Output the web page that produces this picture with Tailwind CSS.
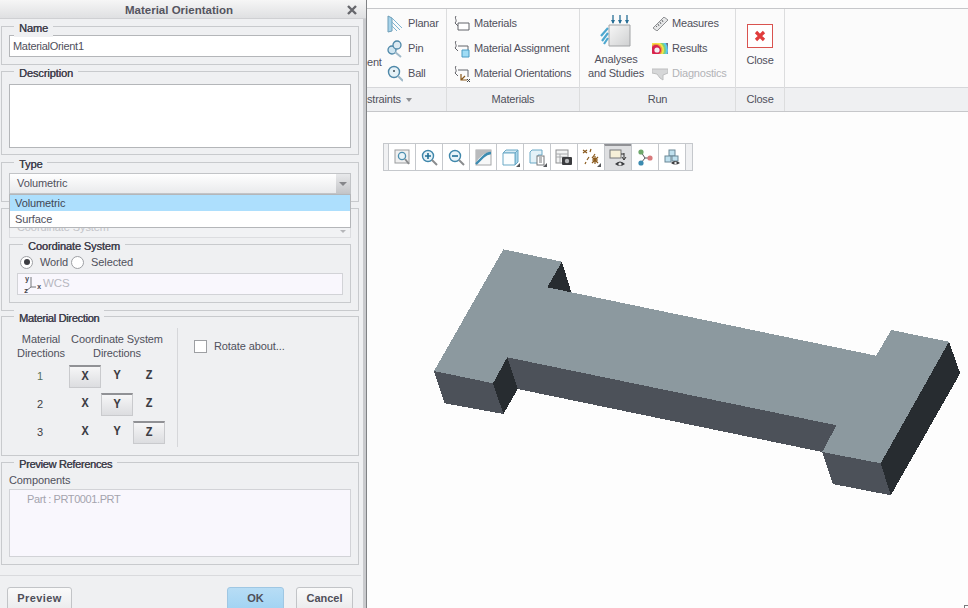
<!DOCTYPE html>
<html lang="en">
<head>
  <meta charset="UTF-8" />
  <title>Material Orientation</title>
  <script src="https://cdn.jsdelivr.net/npm/@tailwindcss/browser@4"></script>
</head>
<body class="w-[968px] h-[608px] overflow-hidden bg-[#fdfdfd] flex font-['Liberation_Sans',sans-serif] text-[11px] tracking-[-0.1px] text-[#50505c]">

  <!-- dialog -->
  <div class="relative w-[367px] h-[608px] shrink-0 bg-[#eff0f2] border-r border-[#808285] overflow-hidden">
    <div class="absolute right-0 top-0 w-[3px] h-full bg-[#c9cacd]"></div>
    <div class="h-[19px] bg-gradient-to-b from-[#f6f6f6] to-[#dfe0e2] border-b border-[#cfd0d3] flex items-center justify-center pr-[8px] pt-[3px] relative">
      <span class="font-bold text-[11.5px] tracking-normal text-[#55555f]">Material Orientation</span>
      <svg class="absolute left-[347px] top-[5px]" width="10" height="10" viewBox="0 0 10 10"><path d="M1 1L9 9M9 1L1 9" stroke="#66676c" stroke-width="2.4"/></svg>
    </div>
    <div class="w-[361px] pl-[1px] pt-[7px] flex flex-col">

      <div class="relative h-[39px] w-[358px] border border-[#c8cacd] pt-[8px] pl-[7px]">
        <span class="absolute left-[12px] top-[-7px] px-[5px] bg-[#eff0f2] text-[#3f3f4c] [text-shadow:0.35px_0_0_#3f3f4c]">Name</span>
        <div class="w-[342px] h-[22px] border border-[#b4b6b9] bg-white flex items-center pl-[3px] tracking-[-0.3px]">MaterialOrient1</div>
      </div>

      <div class="relative h-[84px] w-[358px] mt-[6px] border border-[#c8cacd] pt-[12px] pl-[7px]">
        <span class="absolute left-[12px] top-[-7px] px-[5px] bg-[#eff0f2] text-[#3f3f4c] [text-shadow:0.35px_0_0_#3f3f4c]">Description</span>
        <div class="w-[342px] h-[64px] border border-[#b4b6b9] bg-white"></div>
      </div>

      <div class="relative h-[40px] w-[358px] mt-[7px] border border-[#c8cacd] pt-[10px] pl-[7px]">
        <span class="absolute left-[12px] top-[-7px] px-[5px] bg-[#eff0f2] text-[#3f3f4c] [text-shadow:0.35px_0_0_#3f3f4c]">Type</span>
        <div class="w-[342px] h-[21px] border border-[#c2c4c7] bg-gradient-to-b from-white to-[#e9eaec] flex items-center pl-[7px] relative">Volumetric
          <div class="absolute right-0 top-0 w-[14px] h-[19px] bg-gradient-to-b from-[#e8e9eb] to-[#c5c6c9] flex items-center justify-center">
            <div class="w-0 h-0 border-l-[4px] border-r-[4px] border-t-[4px] border-l-transparent border-r-transparent border-t-[#85868a]"></div>
          </div>
        </div>
      </div>

      <div class="relative h-[103px] w-[358px] mt-[6px] border border-[#c8cacd] pl-[7px] pt-[8px]">
        <div class="w-[342px] h-[21px] border border-[#dcdde0] bg-[#f1f2f4] flex items-center pl-[7px] text-[#c3c4c8] relative">Coordinate System
          <div class="absolute right-[4px] bottom-[4px] w-0 h-0 border-l-[3px] border-r-[3px] border-t-[3px] border-l-transparent border-r-transparent border-t-[#b5b6b9]"></div>
        </div>
        <div class="relative h-[59px] w-[342px] border border-[#c8cacd] mt-[6px] px-[7px] pt-[9px]">
          <span class="absolute left-[13px] top-[-7px] px-[5px] bg-[#eff0f2] text-[#3f3f4c] [text-shadow:0.35px_0_0_#3f3f4c]">Coordinate System</span>
          <div class="flex items-center h-[16px]">
            <span class="w-[13px] h-[13px] rounded-full border border-[#9d9fa3] bg-white flex items-center justify-center ml-[3px]"><span class="w-[6px] h-[6px] rounded-full bg-[#3c3d42]"></span></span>
            <span class="ml-[7px]">World</span>
            <span class="w-[13px] h-[13px] rounded-full border border-[#9d9fa3] bg-white ml-[3px]"></span>
            <span class="ml-[7px]">Selected</span>
          </div>
          <div class="h-[22px] mt-[3px] w-[326px] border border-[#d2d3d7] bg-[#f9f7fd] flex items-center pl-[6px] text-[#b7b7c0] text-[11.5px]">
            <svg width="18" height="20" viewBox="0 0 18 20" class="mr-[1px]"><path d="M7 3V13L2 17M7 13H12" stroke="#77787c" fill="none"/><text x="1" y="7" font-size="7" font-family="Liberation Mono" font-weight="700" fill="#46464c">y</text><text x="0" y="19" font-size="7" font-family="Liberation Mono" font-weight="700" fill="#46464c">z</text><text x="13" y="15" font-size="7" font-family="Liberation Mono" font-weight="700" fill="#46464c">x</text></svg>
            WCS
          </div>
        </div>
      </div>

      <div class="relative h-[140px] w-[358px] mt-[5px] border border-[#c8cacd] flex">
        <span class="absolute left-[12px] top-[-7px] px-[5px] bg-[#eff0f2] text-[#3f3f4c] tracking-[-0.3px] [text-shadow:0.35px_0_0_#3f3f4c]">Material Direction</span>
        <div class="w-[176px] h-[119px] mt-[11px] border-r border-[#d6d7da] shrink-0">
          <div class="flex text-center leading-[14px] pt-[4px]">
            <div class="w-[64px] ml-[7px] shrink-0">Material<br>Directions</div>
            <div class="w-[100px] ml-[-6px] shrink-0">Coordinate System<br>Directions</div>
          </div>
          <div class="grid grid-cols-[67px_32px_32px_32px] auto-rows-[28px] mt-[2px] text-center font-['Liberation_Mono',monospace] font-bold text-[12px] text-[#3d3d44] items-center">
            <span class="font-['Liberation_Sans',sans-serif] font-normal text-[11px] text-[#55705c] ml-[9px]">1</span>
            <span class="h-[23px] border border-[#c9cacd] border-t-2 border-t-[#909195] bg-gradient-to-b from-[#f6f6f7] to-[#dcdde0] flex items-center justify-center">X</span>
            <span>Y</span><span>Z</span>
            <span class="font-['Liberation_Sans',sans-serif] font-normal text-[11px] ml-[9px]">2</span>
            <span>X</span>
            <span class="h-[23px] border border-[#c9cacd] border-t-2 border-t-[#909195] bg-gradient-to-b from-[#f6f6f7] to-[#dcdde0] flex items-center justify-center">Y</span>
            <span>Z</span>
            <span class="font-['Liberation_Sans',sans-serif] font-normal text-[11px] ml-[9px]">3</span>
            <span>X</span><span>Y</span>
            <span class="h-[23px] border border-[#c9cacd] border-t-2 border-t-[#909195] bg-gradient-to-b from-[#f6f6f7] to-[#dcdde0] flex items-center justify-center">Z</span>
          </div>
        </div>
        <div class="flex items-start pl-[16px] pt-[23px]">
          <span class="w-[13px] h-[13px] border border-[#9d9fa3] bg-white shrink-0"></span>
          <span class="ml-[7px] leading-[13px]">Rotate about...</span>
        </div>
      </div>

      <div class="relative h-[103px] w-[358px] mt-[6px] border border-[#c8cacd] pl-[7px] pt-[10px]">
        <span class="absolute left-[12px] top-[-7px] px-[5px] bg-[#eff0f2] text-[#3f3f4c] tracking-[-0.3px] [text-shadow:0.35px_0_0_#3f3f4c]">Preview References</span>
        <div class="h-[15px] leading-[15px]">Components</div>
        <div class="w-[342px] h-[68px] mt-[1px] border border-[#d2d3d7] bg-[#f9f7fd] pl-[17px] pt-[1px] text-[#a4a4ae] tracking-[-0.4px]">Part : PRT0001.PRT</div>
      </div>
    </div>

    <div class="w-[361px] mt-[10px] border-t border-[#d9dadd] pt-[11px] pl-[7px] pr-[8px] flex">
      <div class="w-[65px] h-[30px] border border-[#c2c4c7] rounded-[3px] bg-gradient-to-b from-[#fafafa] to-[#e6e7e9] font-bold tracking-[0.4px] text-center pt-[2px] text-[#4f4f5a]">Preview</div>
      <div class="ml-auto w-[57px] h-[30px] border border-[#9fc7e3] rounded-[3px] bg-gradient-to-b from-[#b7ddf5] to-[#9bd0f2] font-bold tracking-normal text-center pt-[2px] text-[#4f4f5a]">OK</div>
      <div class="ml-[12px] w-[57px] h-[30px] border border-[#c2c4c7] rounded-[3px] bg-gradient-to-b from-[#fafafa] to-[#e6e7e9] font-bold tracking-normal text-center pt-[2px] text-[#4f4f5a]">Cancel</div>
    </div>

    <!-- open dropdown, it covers the select below it -->
    <div class="absolute left-[9px] top-[194px] w-[342px] h-[34px] border border-[#b4b6b9] bg-white">
      <div class="h-[16px] bg-[#addffd] pl-[5px] leading-[16px] text-[#3f4654]">Volumetric</div>
      <div class="h-[16px] pl-[5px] leading-[16px]">Surface</div>
    </div>
  </div>

  <!-- main area -->
  <div class="relative flex-1 min-w-0 tracking-[-0.2px]">
    <div class="mt-[8px] border-t border-b border-[#c6c7ca] h-[104px] flex bg-[#fbfbfb]">

      <div class="w-[80px] border-r border-[#dcddde] flex flex-col">
        <div class="h-[78px] flex">
          <div class="w-[20px] pt-[45px]">ent</div>
          <div class="flex flex-col pt-[2px]">
            <div class="h-[25px] flex items-center gap-[5px]">
              <svg width="16" height="18" viewBox="0 0 16 18"><path d="M1 1L5 3V16L1 17Z" fill="#a6d3ea" stroke="#6d9cb5"/><path d="M5 3L15 13M5 7L13 15M5 11L10 16" stroke="#7fb3cf"/></svg>Planar
            </div>
            <div class="h-[25px] flex items-center gap-[5px]">
              <svg width="16" height="18" viewBox="0 0 16 18"><circle cx="5" cy="10" r="4" fill="#cfe5f1" stroke="#4d87a8" stroke-width="1.3"/><circle cx="10" cy="5" r="4" fill="#dceaf2" stroke="#4d87a8" stroke-width="1.3"/><path d="M8 12L14 17" stroke="#9fb9c9" stroke-width="2"/></svg>Pin
            </div>
            <div class="h-[25px] flex items-center gap-[5px]">
              <svg width="16" height="18" viewBox="0 0 16 18"><circle cx="7" cy="7" r="5.5" fill="#e5f1f7" stroke="#4d87a8" stroke-width="1.4"/><circle cx="7" cy="6" r="1" fill="#3d4a52"/><path d="M11 11L16 16" stroke="#9fb9c9" stroke-width="2"/></svg>Ball
            </div>
          </div>
        </div>
        <div class="h-[24px] bg-[#eff0f2] border-t border-[#d6d7da] flex items-center">straints
          <span class="ml-[5px] w-0 h-0 border-l-[3px] border-r-[3px] border-t-[4px] border-l-transparent border-r-transparent border-t-[#8f9094]"></span>
        </div>
      </div>

      <div class="w-[133px] border-r border-[#dcddde] flex flex-col">
        <div class="h-[78px] flex flex-col pt-[2px] pl-[6px]">
          <div class="h-[25px] flex items-center gap-[4px]">
            <svg width="17" height="18" viewBox="0 0 17 18"><path d="M3 1C1 4 5 5 2 8L5 11" stroke="#63646a" fill="none"/><path d="M5 8H16V15H5Z" fill="#fff" stroke="#63646a"/></svg>Materials
          </div>
          <div class="h-[25px] flex items-center gap-[4px]">
            <svg width="17" height="18" viewBox="0 0 17 18"><path d="M3 1C1 4 5 5 2 8L5 11" stroke="#63646a" fill="none"/><path d="M5 6H15V11" fill="none" stroke="#63646a"/><path d="M9 10H16V17H9Z" fill="#9fdcf5" stroke="#4b9cc4"/></svg>Material Assignment
          </div>
          <div class="h-[25px] flex items-center gap-[4px]">
            <svg width="17" height="18" viewBox="0 0 17 18"><path d="M3 1C1 4 5 5 2 8L5 11" stroke="#63646a" fill="none"/><path d="M5 5H15V12" fill="none" stroke="#63646a"/><path d="M8 9V15H14M8 15L12 11" stroke="#8a5a1c" stroke-width="1.2" fill="none"/><path d="M14 14L17 17M17 14L14 17" stroke="#444"/></svg>Material Orientations
          </div>
        </div>
        <div class="h-[24px] bg-[#eff0f2] border-t border-[#d6d7da] flex items-center justify-center">Materials</div>
      </div>

      <div class="w-[156px] border-r border-[#dcddde] flex flex-col">
        <div class="h-[78px] flex">
          <div class="w-[72px] shrink-0 flex flex-col items-center pt-[5px]">
            <svg width="32" height="33" viewBox="0 0 32 33"><defs><linearGradient id="sq" x1="0" y1="0" x2="1" y2="1"><stop offset="0" stop-color="#f7f7f7"/><stop offset="1" stop-color="#cfd0d1"/></linearGradient></defs><path d="M13 1V9M20 1V9M27 1V9" stroke="#286f96" stroke-width="1.3"/><path d="M11 6L13 10L15 6ZM18 6L20 10L22 6ZM25 6L27 10L29 6Z" fill="#286f96"/><path d="M9 11H30V32H9Z" fill="url(#sq)" stroke="#a1a3a5"/><path d="M8 14L1 22M8 19L2 27M8 24L4 30" stroke="#4fa8cf" stroke-width="2.2"/></svg>
            <div class="text-center leading-[14px] mt-[5px]">Analyses<br>and Studies</div>
          </div>
          <div class="flex flex-col pt-[2px]">
            <div class="h-[25px] flex items-center gap-[4px]">
              <svg width="16" height="14" viewBox="0 0 16 14"><path d="M12 0L16 3L5 14L1 11Z" fill="#e6e7e8" stroke="#8d8f92"/><path d="M4 9L5 10M6 7L7 9M8 5L9 7M10 3L11 5" stroke="#6f7174"/></svg>Measures
            </div>
            <div class="h-[25px] flex items-center gap-[4px]">
              <svg width="16" height="14" viewBox="0 0 16 14"><defs><clipPath id="rc"><rect x="0" y="1" width="16" height="11"/></clipPath></defs><g clip-path="url(#rc)"><rect x="0" y="1" width="16" height="11" fill="#6c6e86"/><circle cx="4" cy="8" r="12" fill="#5cc8ef"/><circle cx="4" cy="8" r="10" fill="#7fd27a"/><circle cx="4" cy="8" r="8" fill="#f3e44a"/><circle cx="4" cy="8" r="6.3" fill="#ef9a3f"/><circle cx="4" cy="8" r="5" fill="#d8234f"/><circle cx="5" cy="8" r="2.6" fill="#f2eef2"/></g></svg>Results
            </div>
            <div class="h-[25px] flex items-center gap-[4px] text-[#b2b3b7]">
              <svg width="16" height="14" viewBox="0 0 16 14"><path d="M0 2H16V6L11 8V13L8 11L5 7L0 6Z" fill="#d6d7d8" stroke="#bdbebf"/></svg>Diagnostics
            </div>
          </div>
        </div>
        <div class="h-[24px] bg-[#eff0f2] border-t border-[#d6d7da] flex items-center justify-center">Run</div>
      </div>

      <div class="w-[49px] border-r border-[#dcddde] flex flex-col">
        <div class="h-[78px] flex flex-col items-center pt-[15px]">
          <div class="w-[26px] h-[24px] border border-[#d9534f] bg-white flex items-center justify-center">
            <svg width="12" height="12" viewBox="0 0 12 12"><path d="M2 2L10 10M10 2L2 10" stroke="#e03c3c" stroke-width="3.2"/></svg>
          </div>
          <div class="mt-[5px] leading-[14px]">Close</div>
        </div>
        <div class="h-[24px] bg-[#eff0f2] border-t border-[#d6d7da] flex items-center justify-center">Close</div>
      </div>

      <div class="flex-1 flex flex-col">
        <div class="h-[78px]"></div>
        <div class="h-[24px] bg-[#eff0f2] border-t border-[#d6d7da]"></div>
      </div>
    </div>

    <!-- view toolbar -->
    <div class="absolute left-[16px] top-[143px] h-[28px] w-[310px] border border-[#c5c8cc] bg-[#f0f1f3] flex pl-[4px]">
      <div class="w-[27px] bg-white border-l border-[#c5c8cc] flex items-center justify-center">
        <svg width="17" height="17" viewBox="0 0 17 17"><rect x="1" y="1" width="14" height="13" fill="#f0f0f0" stroke="#9a9c9e"/><circle cx="8" cy="7" r="3.6" fill="#e8f3f8" stroke="#4c8fb0" stroke-width="1.3"/><path d="M11 10L15 15" stroke="#8a8c8e" stroke-width="2"/></svg>
      </div>
      <div class="w-[27px] bg-white border-l border-[#c5c8cc] flex items-center justify-center">
        <svg width="17" height="17" viewBox="0 0 17 17"><circle cx="7" cy="7" r="5.5" fill="#e8f3f8" stroke="#3f87ab" stroke-width="1.4"/><path d="M4 7H10M7 4V10" stroke="#1f6f96" stroke-width="1.6"/><path d="M11 11L16 16" stroke="#8a8c8e" stroke-width="2"/></svg>
      </div>
      <div class="w-[27px] bg-white border-l border-[#c5c8cc] flex items-center justify-center">
        <svg width="17" height="17" viewBox="0 0 17 17"><circle cx="7" cy="7" r="5.5" fill="#e8f3f8" stroke="#3f87ab" stroke-width="1.4"/><path d="M4 7H10" stroke="#1f6f96" stroke-width="1.6"/><path d="M11 11L16 16" stroke="#8a8c8e" stroke-width="2"/></svg>
      </div>
      <div class="w-[27px] bg-white border-l border-[#c5c8cc] flex items-center justify-center">
        <svg width="17" height="17" viewBox="0 0 17 17"><rect x="1" y="1" width="15" height="15" fill="#f7f8f8" stroke="#a4a6a8"/><path d="M1 1H16V3Q6 4 1 14Z" fill="#b9bbbd"/><path d="M1 15L8 8Q12 4 16 4" stroke="#3c8bb0" stroke-width="2.4" fill="none"/></svg>
      </div>
      <div class="relative w-[27px] bg-white border-l border-[#c5c8cc] flex items-center justify-center">
        <svg width="17" height="17" viewBox="0 0 17 17"><path d="M4 1H16L13 4H1Z" fill="#d5ebf5" stroke="#6aa9c6"/><path d="M16 1V13L13 16V4Z" fill="#a9d6ea" stroke="#6aa9c6"/><path d="M1 4H13V16H1Z" fill="#fafdfe" stroke="#6aa9c6"/></svg>
        <span class="absolute right-[3px] bottom-[3px] w-0 h-0 border-l-[4px] border-t-[4px] border-l-transparent border-t-transparent border-r-[4px] border-r-[#55575a]"></span>
      </div>
      <div class="relative w-[27px] bg-white border-l border-[#c5c8cc] flex items-center justify-center">
        <svg width="17" height="17" viewBox="0 0 17 17"><path d="M1 3L3 1H13V6H9V14H1Z" fill="#e4f2f8" stroke="#6aa9c6"/><rect x="8" y="7" width="7" height="9" fill="#fff" stroke="#77797b"/><path d="M10 9H13M10 11H13M10 13H13" stroke="#77797b"/></svg>
        <span class="absolute right-[3px] bottom-[3px] w-0 h-0 border-l-[4px] border-t-[4px] border-l-transparent border-t-transparent border-r-[4px] border-r-[#55575a]"></span>
      </div>
      <div class="w-[27px] bg-white border-l border-[#c5c8cc] flex items-center justify-center">
        <svg width="18" height="17" viewBox="0 0 18 17"><rect x="1" y="1" width="12" height="13" fill="#f2f3f3" stroke="#8d8f91"/><path d="M1 5H13M1 8H13M5 5V14" stroke="#a8aaac"/><rect x="7" y="8" width="10" height="8" rx="1" fill="#3a3b3e"/><circle cx="12" cy="12" r="2.2" fill="#b6b8ba"/></svg>
      </div>
      <div class="relative w-[27px] bg-white border-l border-[#c5c8cc] flex items-center justify-center">
        <svg width="18" height="18" viewBox="0 0 18 18"><path d="M1 2L5 5M5 2L1 5M9 1L8 4M13 6L11 9M7 9L5 12M4 14L3 16M10 12L16 12M13 8V16M10 9L16 15M16 9L10 15" stroke="#8a5a1c" stroke-width="1.2"/></svg>
        <span class="absolute right-[3px] bottom-[3px] w-0 h-0 border-l-[4px] border-t-[4px] border-l-transparent border-t-transparent border-r-[4px] border-r-[#55575a]"></span>
      </div>
      <div class="w-[27px] bg-[#dedfe1] border-l border-[#c5c8cc] border-t-2 border-t-[#909195] flex items-center justify-center">
        <svg width="19" height="19" viewBox="0 0 19 19"><rect x="1" y="1" width="11" height="8" fill="#f7f0d8" stroke="#77797b"/><path d="M15 4V10M13 8L15 11L17 8M12 5H15" stroke="#333" fill="none"/><path d="M6 15Q11 10 16 15Q11 19 6 15Z" fill="#3a3b3e"/><circle cx="11" cy="15" r="1.6" fill="#e8e8e8"/></svg>
      </div>
      <div class="w-[27px] bg-white border-l border-[#c5c8cc] flex items-center justify-center">
        <svg width="17" height="17" viewBox="0 0 17 17"><path d="M4 3L8 9L4 14M8 9H13" stroke="#55575a" fill="none"/><circle cx="4" cy="3" r="2.6" fill="#6fa86c"/><circle cx="13" cy="9" r="2.6" fill="#d97a7c"/><circle cx="4" cy="14" r="2.6" fill="#3c8bb0"/></svg>
      </div>
      <div class="w-[27px] bg-white border-l border-[#c5c8cc] flex items-center justify-center">
        <svg width="18" height="17" viewBox="0 0 18 17"><rect x="6" y="1" width="6" height="6" fill="#bfe0ee" stroke="#6a8796"/><rect x="2" y="7" width="6" height="6" fill="#bfe0ee" stroke="#6a8796"/><rect x="9" y="7" width="6" height="5" fill="#bfe0ee" stroke="#6a8796"/><path d="M8 14Q12 10 17 14Q12 17 8 14Z" fill="#3a3b3e"/><circle cx="12.5" cy="14" r="1.2" fill="#e8e8e8"/></svg>
      </div>
      <div class="flex-1 border-l border-[#c5c8cc]"></div>
    </div>

    <!-- part in the graphics window, drawn in page coordinates -->
    <svg class="absolute left-0 top-0 pointer-events-none" width="601" height="608" viewBox="367 0 601 608" shape-rendering="crispEdges">
      <path d="M561.9 261.7L571.3 292.3L547.3 287.3Z" fill="#272c30"/>
      <path d="M507.2 357.3L517.7 389L503.4 414L493 383.3Z" fill="#272c30"/>
      <path d="M434 371L493 383.3L503.4 414L444.5 403.3Z" fill="#4c5159"/>
      <path d="M507.2 357.3L517.7 389L822.2 452L836.5 425.3Z" fill="#4c5159"/>
      <path d="M822.2 452L880.7 463.3L890.8 495.3L832.7 484Z" fill="#4c5159"/>
      <path d="M949 341.7L960.2 373.3L890.8 495.3L880.7 463.3Z" fill="#272c30"/>
      <path d="M503.4 249.3L561.9 261.7L547.3 287.3L571.3 292.3L876.2 355.7L891.2 330L949 341.7L880.7 463.3L822.2 452L836.5 425.3L507.2 357.3L493 383.3L434 371Z" fill="#8c999f"/>
    </svg>

    <!-- corner of something cut off by the screenshot -->
    <div class="absolute right-0 bottom-0 w-[4px] h-[3px] border-t border-l border-[#77797b]"></div>
  </div>
</body>
</html>
